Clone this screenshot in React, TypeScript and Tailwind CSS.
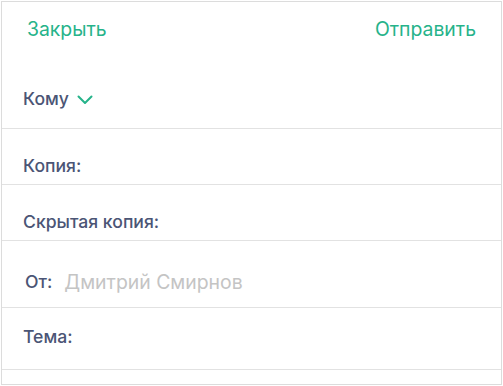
const font = { fontFamily: "Inter, 'Noto Sans', sans-serif" };

function Field({
  label,
  value,
  className,
}: {
  label: string;
  value?: string;
  className: string;
}) {
  return (
    <div className={`flex items-end border-b border-[#e2e2e2] ${className}`}>
      <span className="text-[17.6px] leading-[24px] font-[450] text-[#4b5575]">{label}</span>
      {value && (
        <span className="ml-[12px] text-[19.4px] leading-[24px] text-[#c4c4c4]">{value}</span>
      )}
    </div>
  );
}

export default function App() {
  return (
    <div className="min-h-screen bg-white pl-px pt-px" style={font}>
      <div className="w-[501px] h-[384px] border border-[#dcdcdc] bg-white">
        <div className="h-[127px] border-b border-[#e2e2e2] flex flex-col">
          <div className="flex justify-between pl-[25px] pr-[25px] pt-[13px] text-[19.4px] text-[#26b38a]">
            <button>Закрыть</button>
            <button>Отправить</button>
          </div>
          <div className="flex items-center gap-[8px] pl-[21px] mt-[42px]">
            <span className="text-[17.6px] font-[450] text-[#4b5575]">Кому</span>
            <svg width="16" height="10" viewBox="0 0 16 10" fill="none" className="mt-[1px]">
              <polyline
                points="1.5,1.5 8,8 14.5,1.5"
                stroke="#26b38a"
                strokeWidth="2"
                strokeLinecap="round"
                strokeLinejoin="round"
              />
            </svg>
          </div>
        </div>
        <Field label="Копия:" className="h-[56px] pl-[21px] pb-[6px]" />
        <Field label="Скрытая копия:" className="h-[56px] pl-[21px] pb-[6px]" />
        <Field label="От:" value="Дмитрий Смирнов" className="h-[67px] pl-[23px] pb-[13px]" />
        <Field label="Тема:" className="h-[62px] pl-[21px] pb-[20px]" />
      </div>
    </div>
  );
}
